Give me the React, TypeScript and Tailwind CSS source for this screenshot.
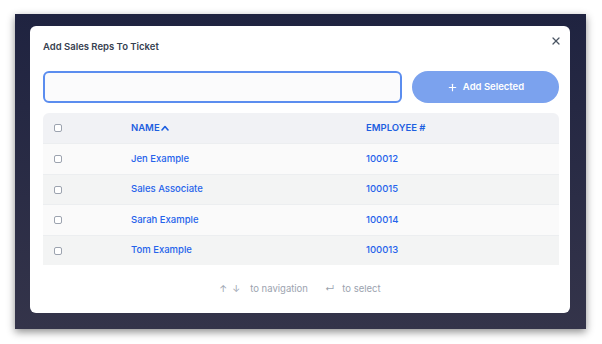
import { X, Plus } from "lucide-react";

const reps = [
  { name: "Jen Example", id: "100012" },
  { name: "Sales Associate", id: "100015" },
  { name: "Sarah Example", id: "100014" },
  { name: "Tom Example", id: "100013" },
];

function Box() {
  return <span className="block w-[8px] h-[8px] rounded-[2px] border border-[#9ca3af] bg-white" />;
}

export default function App() {
  return (
    <div className="w-[602px] h-[344px] bg-white pt-[14px] pl-[15px] font-['Inter',sans-serif]">
      <div className="w-[571px] h-[315px] bg-gradient-to-b from-[#1f2340] to-[#34344a] pt-[12px] pl-[15px] shadow-[0_3px_8px_rgba(0,0,0,0.45)]">
        <div className="w-[540px] h-[287px] bg-white rounded-[6px] pl-[13px] pr-[11px] flex flex-col">
          <div className="flex items-start justify-between h-[45px]">
            <span className="text-[9.5px] leading-[14px] font-semibold text-[#374151] mt-[14px]">Add Sales Reps To Ticket</span>
            <X size={12} strokeWidth={2.5} className="text-[#4b5563] -mr-[3px] mt-[9px]" />
          </div>
          <div className="flex gap-[10px]">
            <div className="w-[359px] h-[32px] rounded-[6px] border-2 border-[#5b8def] bg-[#fbfbfc]" />
            <div className="flex-1 h-[32px] rounded-full bg-[#7ba2ee] flex items-center justify-center gap-[5px] text-white text-[9.5px] font-semibold">
              <Plus size={11} strokeWidth={2.5} />
              <span>Add Selected</span>
            </div>
          </div>
          <div className="mt-[10px] text-[9.5px] font-medium text-[#2563eb]">
            <div className="flex items-center h-[30px] bg-[#f1f2f5] rounded-t-[6px] font-semibold text-[#1d5fe0]">
              <div className="w-[88px] pl-[11px]"><Box /></div>
              <div className="w-[235px] flex items-center gap-[1px]">
                NAME
                <svg width="8" height="6" viewBox="0 0 8 6" fill="none" stroke="currentColor" strokeWidth="1.6" strokeLinecap="round" strokeLinejoin="round">
                  <path d="M1 5 L4 1.5 L7 5" />
                </svg>
              </div>
              <div>EMPLOYEE #</div>
            </div>
            {reps.map((r, i) => (
              <div
                key={r.id}
                className={`flex items-center border-t border-[#eceef0] ${i % 2 === 0 ? "bg-[#fafafa] h-[31px]" : "bg-[#f3f4f4] h-[30px]"}`}
              >
                <div className="w-[88px] pl-[11px]"><Box /></div>
                <div className="w-[235px]">{r.name}</div>
                <div>{r.id}</div>
              </div>
            ))}
          </div>
          <div className="flex items-center justify-center mt-[17px] text-[9.5px] text-[#9ca3af] pr-[2px]">
            <span>↑</span>
            <span className="ml-[5px]">↓</span>
            <span className="ml-[10px]">to navigation</span>
            <span className="ml-[17px]">↵</span>
            <span className="ml-[8px]">to select</span>
          </div>
        </div>
      </div>
    </div>
  );
}
